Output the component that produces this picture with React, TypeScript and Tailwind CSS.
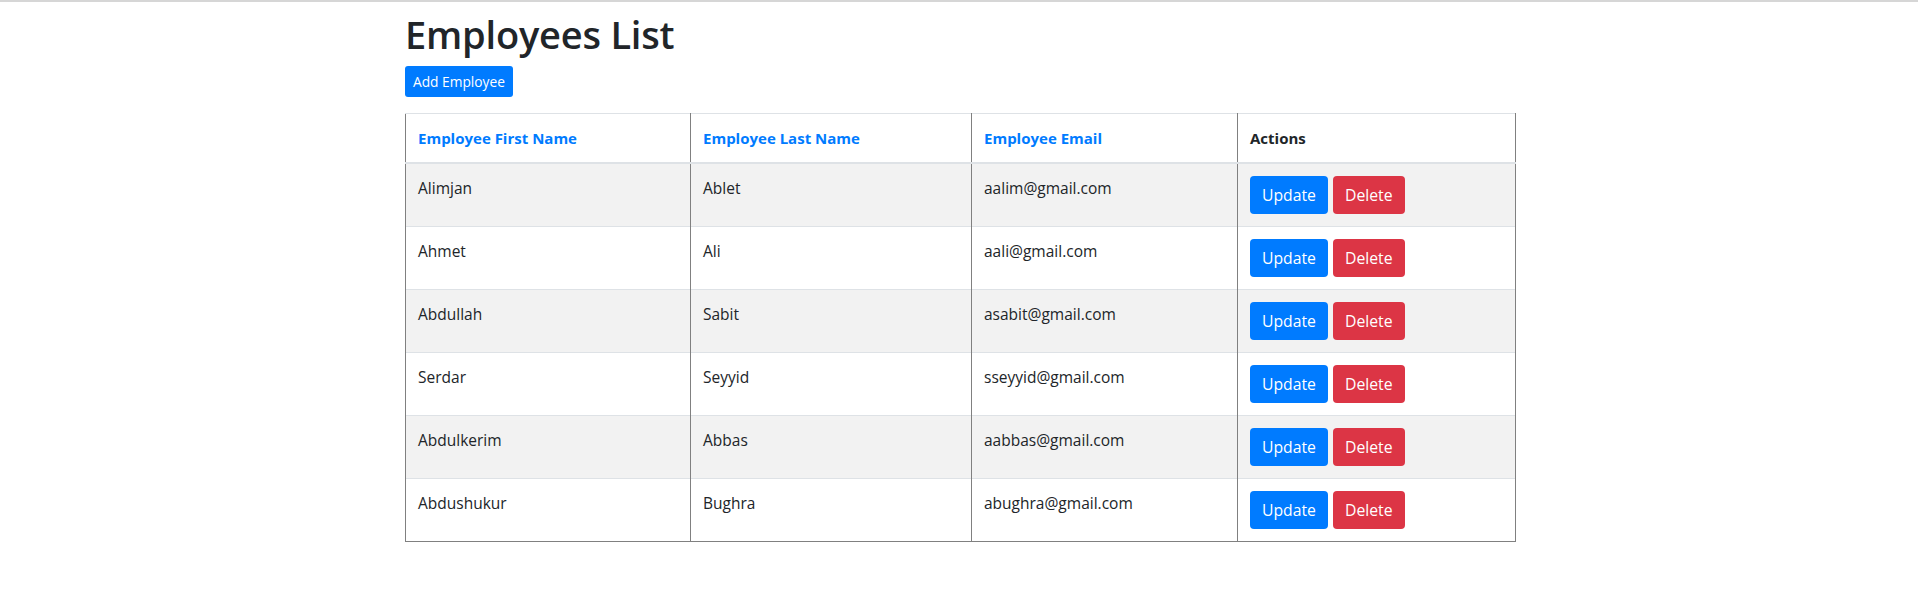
const employees = [
  { first: "Alimjan", last: "Ablet", email: "aalim@gmail.com" },
  { first: "Ahmet", last: "Ali", email: "aali@gmail.com" },
  { first: "Abdullah", last: "Sabit", email: "asabit@gmail.com" },
  { first: "Serdar", last: "Seyyid", email: "sseyyid@gmail.com" },
  { first: "Abdulkerim", last: "Abbas", email: "aabbas@gmail.com" },
  { first: "Abdushukur", last: "Bughra", email: "abughra@gmail.com" },
];

const font = "font-['Segoe_UI','Open_Sans',sans-serif]";

export default function App() {
  return (
    <div className={`min-h-[605px] bg-white text-[#212529] ${font}`}>
      <div className="h-[2px] bg-[#d6d6d6]" />
      <div className="mx-auto w-[1140px] pl-[16px] pr-[14px] pt-2">
        <h1 className="mb-2 text-[38px] font-semibold leading-[48px] tracking-[-0.2px]">Employees List</h1>
        <button className="h-[31px] rounded-[3px] bg-[#007bff] px-2 text-[13.75px] leading-[21px] text-white">
          Add Employee
        </button>
        <table className="mt-4 w-[1110px] table-fixed border-collapse text-[15.5px] leading-6">
          <colgroup>
            <col className="w-[285px]" />
            <col className="w-[281px]" />
            <col className="w-[266px]" />
            <col className="w-[278px]" />
          </colgroup>
          <thead>
            <tr className="text-[15px]">
              {["Employee First Name", "Employee Last Name", "Employee Email"].map((h) => (
                <th
                  key={h}
                  className="border-x border-t border-b-2 border-x-[#808080] border-t-[#dee2e6] border-b-[#dee2e6] p-3 text-left font-bold text-[#007bff]"
                >
                  {h}
                </th>
              ))}
              <th className="border-x border-t border-b-2 border-x-[#808080] border-t-[#dee2e6] border-b-[#dee2e6] p-3 text-left font-bold">
                Actions
              </th>
            </tr>
          </thead>
          <tbody>
            {employees.map((e, i) => {
              const last = i === employees.length - 1;
              const cell = `border-x border-x-[#808080] border-t border-t-[#dee2e6] p-3 align-top ${
                last ? "border-b border-b-[#808080]" : ""
              }`;
              return (
                <tr key={e.email} className={i % 2 === 0 ? "bg-[#f2f2f2]" : "bg-white"}>
                  <td className={cell}>{e.first}</td>
                  <td className={cell}>{e.last}</td>
                  <td className={cell}>{e.email}</td>
                  <td className={cell}>
                    <div className="flex gap-[5px] text-[15.75px]">
                      <button className="h-[38px] rounded bg-[#007bff] px-3 text-white">Update</button>
                      <button className="h-[38px] rounded bg-[#dc3545] px-3 text-white">Delete</button>
                    </div>
                  </td>
                </tr>
              );
            })}
          </tbody>
        </table>
      </div>
    </div>
  );
}
